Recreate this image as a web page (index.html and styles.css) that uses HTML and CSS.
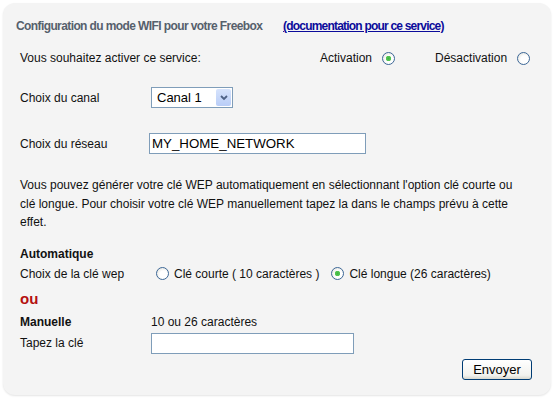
FILE: index.html
```html
<!doctype html>
<html>

<head>
  <title>Configuration WIFI</title>
  <link rel="stylesheet" href="styles.css">
</head>

<body>
  <div class="panel">
    <div class="title">Configuration du mode WIFI pour votre Freebox <a href="#">(documentation pour ce service)</a></div>

    <div class="service-row">
      <span class="service-label">Vous souhaitez activer ce service:</span>
      <span class="choice">Activation <input type="radio" name="service" class="radio" checked></span>
      <span class="choice">Désactivation <input type="radio" name="service" class="radio"></span>
    </div>

    <div class="row canal-row">
      <div class="label">Choix du canal</div>
      <div class="select-wrap">
        <select class="select">
          <option>Canal 1</option>
        </select>
        <span class="select-arrow">
          <svg width="8" height="6" viewBox="0 0 8 6"><path d="M1 1 L4 4 L7 1" fill="none" stroke="#4d6185" stroke-width="1.8"/></svg>
        </span>
      </div>
    </div>

    <div class="row reseau-row">
      <div class="label">Choix du réseau</div>
      <input type="text" class="text-input reseau-input" value="MY_HOME_NETWORK">
    </div>

    <p class="explain">Vous pouvez générer votre clé WEP automatiquement en sélectionnant l'option clé courte ou clé longue. Pour choisir votre clé WEP manuellement tapez la dans le champs prévu à cette effet.</p>

    <div class="bold auto-title">Automatique</div>
    <div class="row wep-row">
      <div class="label">Choix de la clé wep</div>
      <div class="wep-options">
        <input type="radio" name="wep" class="radio"> Clé courte ( 10 caractères )
        <input type="radio" name="wep" class="radio radio-second" checked> Clé longue (26 caractères)
      </div>
    </div>

    <div class="ou">ou</div>

    <div class="row manual-row">
      <div class="label bold">Manuelle</div>
      <div>10 ou 26 caractères</div>
    </div>
    <div class="row key-row">
      <div class="label">Tapez la clé</div>
      <input type="text" class="text-input key-input">
    </div>

    <div class="actions">
      <button class="send">Envoyer</button>
    </div>
  </div>
</body>

</html>
```

FILE: styles.css
```css
html{
  background:#fff;
}
body{
  margin:0;
  font-family:"Liberation Sans", Arial, sans-serif;
  font-size:12px;
  color:#111;
}
.panel{
  margin:3px;
  width:548px;
  height:392px;
  box-sizing:border-box;
  background:#f4f4f4;
  border-radius:12px;
  box-shadow:0px 1px 2px #e4e4e4;
  padding:16px 16px 0 17px;
}
.title{
  margin-left:-4px;
  font-weight:bold;
  font-size:12px;
  letter-spacing:-0.6px;
  color:#56606c;
  line-height:14px;
}
.title a{
  color:#0b0b9a;
  letter-spacing:-0.8px;
  margin-left:18px;
}
.service-row{
  display:flex;
  align-items:center;
  margin-top:17px;
  height:16px;
}
.service-label{
  width:300px;
}
.choice{
  display:flex;
  align-items:center;
  margin-right:40px;
}
.choice .radio{
  margin-left:10px;
}
.choice:last-child{
  margin-right:0;
}
.choice:last-child .radio{
  margin-left:10px;
}
.radio{
  appearance:none;
  -webkit-appearance:none;
  width:13px;
  height:13px;
  margin:0;
  border:1px solid #3c6797;
  border-radius:50%;
  background:radial-gradient(circle at 60% 60%, #fff 40%, #dcdcd4 100%);
  box-sizing:border-box;
  vertical-align:middle;
}
.radio:checked{
  background:radial-gradient(circle, #3fb43f 0, #58c858 2.5px, transparent 3px), radial-gradient(circle at 60% 60%, #fff 40%, #dcdcd4 100%);
}
.row{
  display:flex;
  align-items:center;
}
.label{
  width:131px;
  flex:none;
}
.canal-row{
  margin-top:21px;
}
.select-wrap{
  position:relative;
  width:82px;
  height:21px;
}
.select{
  appearance:none;
  -webkit-appearance:none;
  width:82px;
  height:21px;
  border:1px solid #7f9db9;
  background:#fff;
  font-family:inherit;
  font-size:13px;
  padding:0 0 0 5px;
  color:#000;
  border-radius:0;
}
.select-arrow{
  position:absolute;
  right:2px;
  top:2px;
  width:15px;
  height:17px;
  background:linear-gradient(#d6e3fc, #b9cdf7);
  border-radius:2px;
  display:flex;
  align-items:center;
  justify-content:center;
  pointer-events:none;
}
.reseau-row{
  margin-top:25px;
}
.text-input{
  height:21px;
  box-sizing:border-box;
  border:1px solid #7f9db9;
  background:#fff;
  font-family:inherit;
  font-size:13.3px;
  padding:0 2px;
  color:#000;
}
.reseau-input{
  width:217px;
  margin-left:-2px;
}
.explain{
  margin:22px 0 0 0;
  line-height:18.5px;
  padding-right:17px;
}
.bold{
  font-weight:bold;
}
.auto-title{
  margin-top:15px;
  line-height:14px;
}
.wep-row{
  margin-top:6px;
}
.wep-options{
  display:flex;
  align-items:center;
  margin-left:5px;
}
.wep-options .radio{
  margin-right:5px;
}
.radio-second{
  margin-left:12px;
}
.ou{
  color:#b40f0f;
  font-weight:bold;
  font-size:15px;
  margin-top:9px;
  line-height:18px;
}
.manual-row{
  margin-top:7px;
}
.key-row{
  margin-top:4px;
}
.key-input{
  width:203px;
}
.actions{
  display:flex;
  justify-content:flex-end;
  margin-top:5px;
  padding-right:3px;
}
.send{
  width:70px;
  height:21px;
  font-family:inherit;
  font-size:13px;
  border:1px solid #003c74;
  border-radius:3px;
  background:linear-gradient(#fff, #f2f2ee 80%, #d8d8cf);
  color:#000;
  padding:0;
}
```
